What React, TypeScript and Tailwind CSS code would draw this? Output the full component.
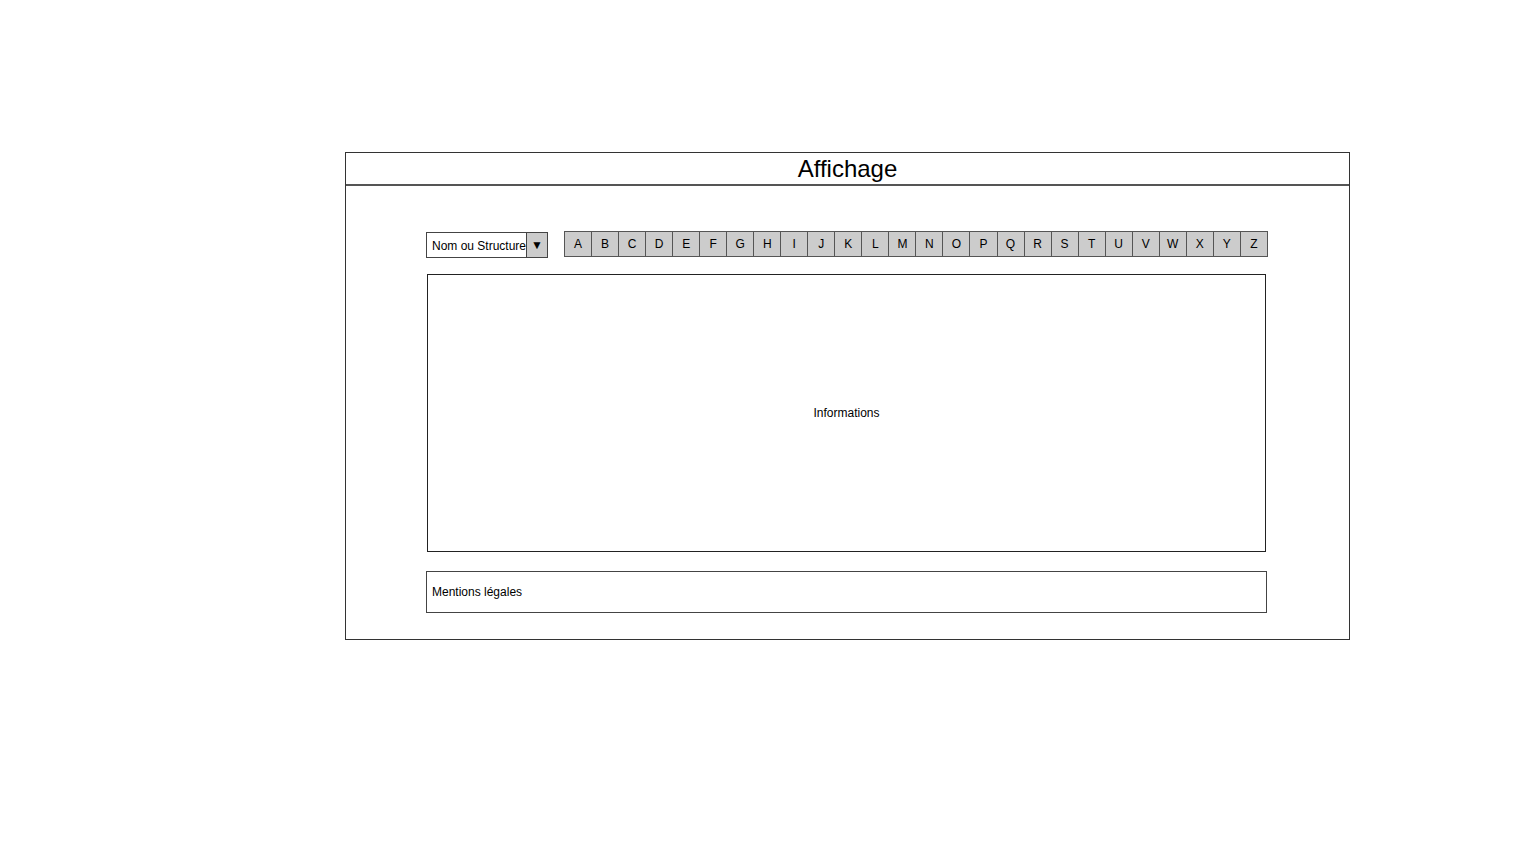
const letters = 'ABCDEFGHIJKLMNOPQRSTUVWXYZ'.split('');

export default function App(): JSX.Element {
  return (
    <div className="min-h-screen bg-white pl-[345px] pt-[152px] font-['Comic_Sans_MS','Liberation_Sans',sans-serif] text-black">
      <div className="flex h-[488px] w-[1005px] flex-col border border-[#333]">
        {/* Titre */}
        <div className="flex h-[33px] items-center justify-center border-b-2 border-[#555]">
          <h1 className="text-[24px] leading-none">Affichage</h1>
        </div>

        <div className="flex flex-col pl-[80px] pt-[45px]">
          {/* Filtres */}
          <div className="flex items-start gap-[16px]">
            <div className="mt-[1px] flex h-[26px] w-[122px] border border-[#444] bg-white">
              <span className="flex flex-1 items-center whitespace-nowrap pl-[5px] pt-[2px] text-[12px]">
                Nom ou Structure
              </span>
              <span className="flex w-[25px] items-center justify-center border-l border-[#444] bg-[#ccc] text-[12px]">
                ▼
              </span>
            </div>
            <div className="flex h-[26px] w-[704px] border border-[#555] bg-[#ccc]">
              {letters.map((l, i) => (
                <div
                  key={l}
                  className={`flex flex-1 items-center justify-center text-[12px] ${
                    i < letters.length - 1 ? 'border-r border-[#555]' : ''
                  }`}
                >
                  {l}
                </div>
              ))}
            </div>
          </div>

          {/* Informations */}
          <div className="ml-[1px] mt-[16px] flex h-[278px] w-[839px] items-center justify-center border border-[#222] text-[12px]">
            Informations
          </div>

          {/* Mentions */}
          <div className="mt-[19px] flex h-[42px] w-[841px] items-center border border-[#444] pl-[5px] text-[12px]">
            Mentions légales
          </div>
        </div>
      </div>
    </div>
  );
}
